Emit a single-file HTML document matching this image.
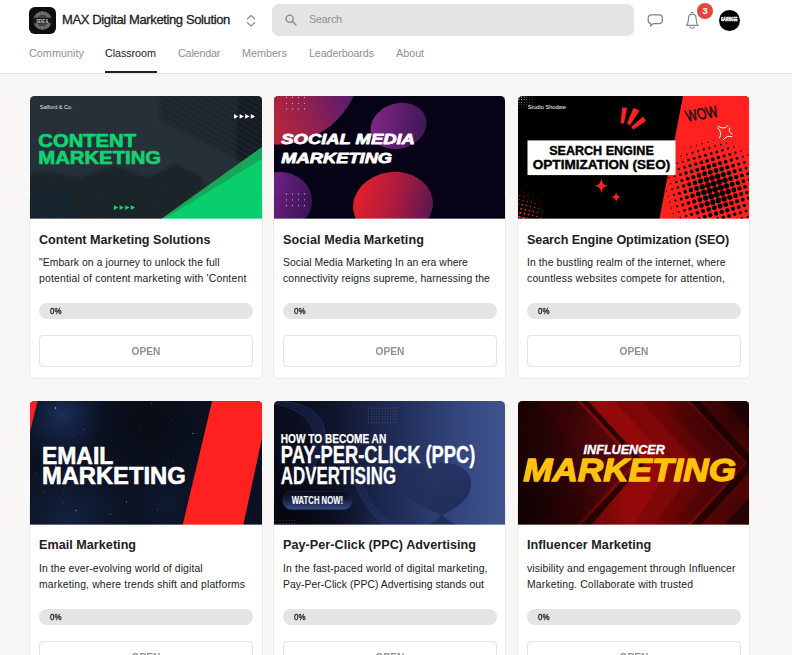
<!DOCTYPE html>
<html lang="en">
<head>
<meta charset="utf-8">
<title>MAX Digital Marketing Solution - Classroom</title>
<style>
*{box-sizing:border-box;margin:0;padding:0}
html,body{width:792px;height:655px;overflow:hidden;background:#f8f7f5;font-family:"Liberation Sans",sans-serif;color:#202124}
.header{position:absolute;left:0;top:0;width:792px;height:74px;background:#fff;border-bottom:1px solid #e4e4e4}
.logo{position:absolute;left:29px;top:7px;width:27px;height:27px;border-radius:6px;background:#0e0e0e;overflow:hidden}
.gname{position:absolute;left:62px;top:12px;font-size:13px;font-weight:400;color:#202124;white-space:nowrap;letter-spacing:0;line-height:15px;-webkit-text-stroke:0.3px #202124}
.chev{position:absolute;left:246px;top:14px}
.search{position:absolute;left:272px;top:4px;width:362px;height:32px;border-radius:7px;background:#e4e4e4}
.search svg{position:absolute;left:13px;top:10px}
.search>span{position:absolute;left:37px;top:8px;font-size:10.8px;color:#8e8e8e;line-height:14px}
.nav a{position:absolute;top:46px;font-size:10.8px;color:#909090;line-height:14px;white-space:nowrap;text-decoration:none}
.nav a.act{color:#202124}
.nav .ul{position:absolute;left:105px;top:71px;width:52px;height:2px;background:#202124}
.badge{position:absolute;left:697px;top:3px;width:16px;height:16px;border-radius:50%;background:#e5453a;color:#fff;font-size:9.9px;font-weight:700;text-align:center;line-height:15.6px}
.avatar{position:absolute;left:719px;top:10px;width:21px;height:21px;border-radius:50%;background:#000;overflow:hidden}
.avatar span{position:absolute;left:2px;top:7.3px;width:17px;height:5px;color:#fff;font-size:5.6px;font-weight:700;line-height:5px;white-space:nowrap;-webkit-text-stroke:0.4px #fff;transform:scaleX(.54);transform-origin:0 50%}
.card{position:absolute;width:232px;height:283px}
.body{position:absolute;left:-1px;top:100px;width:234px;height:183px;background:#fff;border:1px solid #ebebea;border-top:none;border-radius:0 0 5.5px 5.5px}
.thumb{position:absolute;left:0;top:0;width:232px;height:123px;overflow:hidden;border-radius:4.5px 4.5px 0 0;z-index:1}
.thumb svg{display:block}
.card.n,.card.n .thumb{width:231px}
.card.n .body{width:233px}
.thumb.r2{height:125px}
.ct{position:absolute;left:9px;top:137px;font-size:12.6px;font-weight:700;color:#202124;white-space:nowrap;line-height:15px}
.cd{position:absolute;left:9px;top:159px;width:216px;font-size:10.4px;color:#202124;line-height:16.2px;white-space:nowrap}
.ln{display:block;white-space:nowrap}
.r2 .cd{top:160px}
.r2 .pb{top:208px}
.r2 .btn{top:240px}
.pb{position:absolute;left:9px;top:207px;width:214px;height:16px;border-radius:8px;background:#e4e4e4}
.pb span{position:absolute;left:10.5px;top:3px;font-size:9px;font-weight:400;-webkit-text-stroke:0.35px #202124;color:#202124;line-height:10px;transform:scaleX(.88);transform-origin:0 50%}
.btn{position:absolute;left:9px;top:239px;width:214px;height:32px;border:1px solid #e4e4e4;border-radius:4px;text-align:center;font-size:11.3px;font-weight:700;color:#909090;line-height:30px;background:#fff}
.btn span{display:inline-block;transform:scaleX(.9)}
</style>
</head>
<body>
<div class="header">
  <div class="logo">
    <svg width="27" height="27" viewBox="0 0 27 27">
      <circle cx="13.500" cy="13.500" r="9.400" fill="#3a3a3a"/>
      <circle cx="13.500" cy="13.500" r="7.300" fill="none" stroke="#858585" stroke-width="3.400" stroke-dasharray="0.9 0.45"/>
      <circle cx="13.500" cy="13.500" r="4.600" fill="#4a4a4a"/>
      <polygon points="2.500,13.500 5.500,10.700 21.500,10.700 24.500,13.500 21.500,16.300 5.500,16.300" fill="#141414"/>
      <text x="13.600" y="15.500" font-family="Liberation Sans, sans-serif" font-size="5.400" font-weight="700" fill="#dcdcdc" text-anchor="middle" textLength="12.400" lengthAdjust="spacingAndGlyphs">DEXE B.</text>
    </svg>
  </div>
  <div class="gname"><span class="ln" style="letter-spacing:-0.377px">MAX Digital Marketing Solution</span></div>
  <svg class="chev" width="10" height="13" viewBox="0 0 10 13" fill="none" stroke="#909090" stroke-width="1.3" stroke-linecap="round" stroke-linejoin="round"><path d="M1.5 4.7 L5 1.5 L8.5 4.7"/><path d="M1.5 8.7 L5 11.9 L8.5 8.7"/></svg>
  <div class="search">
    <svg width="12" height="12" viewBox="0 0 12 12" fill="none" stroke="#8a8a8a" stroke-width="1.4" stroke-linecap="round"><circle cx="4.7" cy="4.7" r="3.6"/><path d="M7.5 7.5 L11 11"/></svg>
    <span><span class="ln" style="letter-spacing:-0.220px">Search</span></span>
  </div>
  <svg style="position:absolute;left:647.300px;top:14.100px" width="17" height="13" viewBox="0 0 17 13" fill="none" stroke="#828282" stroke-width="1.250" stroke-linejoin="round"><path d="M4.2 0.9 H12.3 A3 3 0 0 1 15.3 3.9 V6.6 A3 3 0 0 1 12.3 9.6 H6.3 L3.5 12 L3.9 9.6 A3 3 0 0 1 1.2 6.6 V3.9 A3 3 0 0 1 4.2 0.9 Z"/></svg>
  <svg style="position:absolute;left:685px;top:11px" width="15" height="19" viewBox="0 0 15 19" fill="none" stroke="#858585" stroke-width="1.15" stroke-linecap="round" stroke-linejoin="round"><path d="M6.600 1.400 H8"/><path d="M1.600 14.300 C2.900 13 3.300 11.500 3.400 8 C3.500 4.900 5 3.100 7.300 3.100 C9.600 3.100 11.100 4.900 11.200 8 C11.300 11.500 11.700 13 13 14.300 Z"/><path d="M5.100 16.200 Q7.300 18.300 9.500 16.200"/></svg>
  <div class="badge">3</div>
  <div class="avatar"><span>GAMINGEE</span></div>
  <div class="nav">
    <a style="left:29px"><span class="ln" style="letter-spacing:0.032px">Community</span></a>
    <a class="act" style="left:105px"><span class="ln" style="letter-spacing:-0.079px">Classroom</span></a>
    <a style="left:178px"><span class="ln" style="letter-spacing:-0.204px">Calendar</span></a>
    <a style="left:242px"><span class="ln" style="letter-spacing:-0.029px">Members</span></a>
    <a style="left:309px"><span class="ln" style="letter-spacing:-0.145px">Leaderboards</span></a>
    <a style="left:396px"><span class="ln" style="letter-spacing:-0.024px">About</span></a>
    <div class="ul"></div>
  </div>
</div>

<!-- CARD 1 -->
<div class="card" style="left:30px;top:96px">
  <div class="body"></div>
  <div class="thumb"><svg width="232" height="123" viewBox="30 96 232 123">
  <defs>
    <linearGradient id="g1a" x1="0" y1="0" x2="1" y2="1"><stop offset="0" stop-color="#252f37"/><stop offset="1" stop-color="#1f2a31"/></linearGradient>
    <pattern id="p1grid" width="4.5" height="4.5" patternUnits="userSpaceOnUse" patternTransform="rotate(-22) skewX(20)"><path d="M0 0H4.5M0 0V4.5" stroke="#10181e" stroke-width="0.6" fill="none"/></pattern>
    <pattern id="p1lines" width="5" height="5" patternUnits="userSpaceOnUse" patternTransform="rotate(30)"><path d="M0 0.500H5" stroke="#2c373f" stroke-width="0.600"/></pattern>
  </defs>
  <rect x="30" y="96" width="232" height="123" fill="#263038"/>
  <filter id="f1b" x="-10%" y="-10%" width="120%" height="120%"><feGaussianBlur stdDeviation="1.6"/></filter>
  <g filter="url(#f1b)">
  <polygon points="158,88 272,88 272,150 250,168 235,158 161,121" fill="#1d262d"/>
  <polygon points="238,88 272,88 272,150 250,168 236,157" fill="#161d23"/>
  <polygon points="20,176 48,171 80,178 113,166 150,178 175,164 200,176 205,186 160,225 20,225" fill="#1c252c"/>
  <polygon points="20,196 66,188 82,225 20,225" fill="#172833"/>
  </g>
  <polygon points="159,96 262,96 262,150 250,166 235,157 161,120" fill="url(#p1lines)" opacity="0.7"/>
  <polygon points="30,176 48,171 80,178 113,166 150,178 175,164 200,176 205,186 160,219 30,219" fill="url(#p1grid)" opacity="0.8"/>
  <polygon points="161,219 262,147 262,159 164,219" fill="#17a65a"/>
  <polygon points="163.500,219 262,158.500 262,219" fill="#08ce6b"/>
  <text x="39.800" y="108.500" font-family="Liberation Sans, sans-serif" font-size="5.600" fill="#e6e8ea" textLength="32.800" lengthAdjust="spacingAndGlyphs">Salford &amp; Co.</text>
  <g fill="#fff"><polygon points="234,114 238.300,116.400 234,118.800"/><polygon points="239.600,114 243.900,116.400 239.600,118.800"/><polygon points="245.200,114 249.500,116.400 245.200,118.800"/><polygon points="250.800,114 255.100,116.400 250.800,118.800"/></g>
  <g fill="#10d472"><polygon points="114,205.200 118.300,207.600 114,210"/><polygon points="119.600,205.200 123.900,207.600 119.600,210"/><polygon points="125.200,205.200 129.500,207.600 125.200,210"/><polygon points="130.800,205.200 135.100,207.600 130.800,210"/></g>
  <g font-family="Liberation Sans, sans-serif" font-weight="700" font-size="19" fill="#10d472" stroke="#10d472" stroke-width="0.700" stroke-linejoin="round">
    <text x="38.300" y="147.100" textLength="97.800" lengthAdjust="spacingAndGlyphs">CONTENT</text>
    <text x="38.300" y="164.100" textLength="122.800" lengthAdjust="spacingAndGlyphs">MARKETING</text>
  </g>
  <rect x="30" y="218.650" width="232" height="1" fill="#fff"/>
</svg></div>
  <div class="ct"><span class="ln" style="letter-spacing:-0.001px">Content Marketing Solutions</span></div>
  <div class="cd"><span class="ln" style="letter-spacing:0.078px">"Embark on a journey to unlock the full</span><span class="ln" style="letter-spacing:0.194px">potential of content marketing with 'Content</span></div>
  <div class="pb"><span>0%</span></div>
  <div class="btn"><span>OPEN</span></div>
</div>
<!-- CARD 2 -->
<div class="card n" style="left:274px;top:96px">
  <div class="body"></div>
  <div class="thumb"><svg width="232" height="123" viewBox="274 96 232 123">
  <defs>
    <linearGradient id="g2a" gradientUnits="userSpaceOnUse" x1="274" y1="130" x2="350" y2="96"><stop offset="0" stop-color="#b8263a"/><stop offset="0.5" stop-color="#8e2052"/><stop offset="1" stop-color="#5a1b6c"/></linearGradient>
    <linearGradient id="g2b" gradientUnits="userSpaceOnUse" x1="372" y1="115" x2="426" y2="140"><stop offset="0" stop-color="#80268a"/><stop offset="1" stop-color="#3c1652"/></linearGradient>
    <linearGradient id="g2c" gradientUnits="userSpaceOnUse" x1="274" y1="190" x2="312" y2="200"><stop offset="0" stop-color="#6a2080"/><stop offset="1" stop-color="#3c1456"/></linearGradient>
    <linearGradient id="g2d" gradientUnits="userSpaceOnUse" x1="356" y1="185" x2="430" y2="215"><stop offset="0" stop-color="#e8202a"/><stop offset="0.5" stop-color="#b01c3c"/><stop offset="1" stop-color="#5e1652"/></linearGradient>
  </defs>
  <rect x="274" y="96" width="232" height="123" fill="#060317"/>
  <circle cx="277.600" cy="60.700" r="83.850" fill="url(#g2a)"/>
  <ellipse cx="398.600" cy="126" rx="28.500" ry="22.500" fill="url(#g2b)" transform="rotate(-18 398.600 126)"/>
  <ellipse cx="280" cy="201" rx="32" ry="29" fill="url(#g2c)"/>
  <ellipse cx="393" cy="205" rx="40" ry="33" fill="url(#g2d)" transform="rotate(-8 392.700 205)"/>
  <g fill="#fff" opacity="0.6"><circle cx="286.5" cy="97.5" r="0.65"/><circle cx="292.5" cy="97.5" r="0.65"/><circle cx="298.5" cy="97.5" r="0.65"/><circle cx="304.5" cy="97.5" r="0.65"/><circle cx="286.5" cy="103.3" r="0.65"/><circle cx="292.5" cy="103.3" r="0.65"/><circle cx="298.5" cy="103.3" r="0.65"/><circle cx="304.5" cy="103.3" r="0.65"/><circle cx="286.5" cy="109.0" r="0.65"/><circle cx="292.5" cy="109.0" r="0.65"/><circle cx="298.5" cy="109.0" r="0.65"/><circle cx="304.5" cy="109.0" r="0.65"/><circle cx="286.5" cy="194.0" r="0.65"/><circle cx="292.5" cy="194.0" r="0.65"/><circle cx="298.5" cy="194.0" r="0.65"/><circle cx="304.5" cy="194.0" r="0.65"/><circle cx="286.5" cy="199.8" r="0.65"/><circle cx="292.5" cy="199.8" r="0.65"/><circle cx="298.5" cy="199.8" r="0.65"/><circle cx="304.5" cy="199.8" r="0.65"/><circle cx="286.5" cy="205.5" r="0.65"/><circle cx="292.5" cy="205.5" r="0.65"/><circle cx="298.5" cy="205.5" r="0.65"/><circle cx="304.5" cy="205.5" r="0.65"/></g>
  <g font-family="Liberation Sans, sans-serif" font-weight="700" font-style="italic" font-size="15.200" fill="#fff" stroke="#fff" stroke-width="0.800" stroke-linejoin="round">
    <text x="281.300" y="144.400" textLength="133.600" lengthAdjust="spacingAndGlyphs">SOCIAL MEDIA</text>
    <text x="281.300" y="163.200" textLength="110.800" lengthAdjust="spacingAndGlyphs">MARKETING</text>
  </g>
  <rect x="274" y="218.650" width="232" height="1" fill="#fff"/>
</svg></div>
  <div class="ct"><span class="ln" style="letter-spacing:0.078px">Social Media Marketing</span></div>
  <div class="cd"><span class="ln" style="letter-spacing:0.048px">Social Media Marketing In an era where</span><span class="ln" style="letter-spacing:0.099px">connectivity reigns supreme, harnessing the</span></div>
  <div class="pb"><span>0%</span></div>
  <div class="btn"><span>OPEN</span></div>
</div>
<!-- CARD 3 -->
<div class="card n" style="left:518px;top:96px">
  <div class="body"></div>
  <div class="thumb"><svg width="232" height="123" viewBox="518 96 232 123">
  <rect x="518" y="96" width="232" height="123" fill="#000"/>
  <polygon points="683,96 750,96 750,219 659.400,219" fill="#ff2020"/>
  <g fill="#000"><circle cx="666.58" cy="190.87" r="0.59"/><circle cx="668.2" cy="196.54" r="0.68"/><circle cx="669.83" cy="202.21" r="0.71"/><circle cx="671.45" cy="207.88" r="0.68"/><circle cx="673.08" cy="213.55" r="0.59"/><circle cx="674.71" cy="219.22" r="0.46"/><circle cx="668.99" cy="177.9" r="0.68"/><circle cx="670.62" cy="183.57" r="0.88"/><circle cx="672.25" cy="189.24" r="1.02"/><circle cx="673.87" cy="194.91" r="1.11"/><circle cx="675.5" cy="200.58" r="1.14"/><circle cx="677.13" cy="206.26" r="1.11"/><circle cx="678.75" cy="211.93" r="1.02"/><circle cx="680.38" cy="217.6" r="0.88"/><circle cx="671.41" cy="164.93" r="0.48"/><circle cx="673.04" cy="170.6" r="0.79"/><circle cx="674.67" cy="176.27" r="1.05"/><circle cx="676.29" cy="181.94" r="1.26"/><circle cx="677.92" cy="187.61" r="1.41"/><circle cx="679.55" cy="193.29" r="1.5"/><circle cx="681.17" cy="198.96" r="1.53"/><circle cx="682.8" cy="204.63" r="1.5"/><circle cx="684.42" cy="210.3" r="1.41"/><circle cx="686.05" cy="215.97" r="1.26"/><circle cx="687.68" cy="221.64" r="1.05"/><circle cx="675.46" cy="157.63" r="0.43"/><circle cx="677.09" cy="163.3" r="0.79"/><circle cx="678.71" cy="168.97" r="1.11"/><circle cx="680.34" cy="174.65" r="1.38"/><circle cx="681.96" cy="180.32" r="1.6"/><circle cx="683.59" cy="185.99" r="1.76"/><circle cx="685.22" cy="191.66" r="1.86"/><circle cx="686.84" cy="197.33" r="1.89"/><circle cx="688.47" cy="203" r="1.86"/><circle cx="690.1" cy="208.67" r="1.76"/><circle cx="691.72" cy="214.35" r="1.6"/><circle cx="693.35" cy="220.02" r="1.38"/><circle cx="679.5" cy="150.33" r="0.27"/><circle cx="681.13" cy="156" r="0.68"/><circle cx="682.76" cy="161.68" r="1.05"/><circle cx="684.38" cy="167.35" r="1.38"/><circle cx="686.01" cy="173.02" r="1.66"/><circle cx="687.64" cy="178.69" r="1.89"/><circle cx="689.26" cy="184.36" r="2.07"/><circle cx="690.89" cy="190.03" r="2.17"/><circle cx="692.51" cy="195.71" r="2.21"/><circle cx="694.14" cy="201.38" r="2.17"/><circle cx="695.77" cy="207.05" r="2.07"/><circle cx="697.39" cy="212.72" r="1.89"/><circle cx="699.02" cy="218.39" r="1.66"/><circle cx="685.18" cy="148.71" r="0.46"/><circle cx="686.8" cy="154.38" r="0.88"/><circle cx="688.43" cy="160.05" r="1.26"/><circle cx="690.05" cy="165.72" r="1.6"/><circle cx="691.68" cy="171.39" r="1.89"/><circle cx="693.31" cy="177.06" r="2.14"/><circle cx="694.93" cy="182.74" r="2.32"/><circle cx="696.56" cy="188.41" r="2.44"/><circle cx="698.19" cy="194.08" r="2.48"/><circle cx="699.81" cy="199.75" r="2.44"/><circle cx="701.44" cy="205.42" r="2.32"/><circle cx="703.06" cy="211.09" r="2.14"/><circle cx="704.69" cy="216.76" r="1.89"/><circle cx="690.85" cy="147.08" r="0.59"/><circle cx="692.47" cy="152.75" r="1.02"/><circle cx="694.1" cy="158.42" r="1.41"/><circle cx="695.73" cy="164.1" r="1.76"/><circle cx="697.35" cy="169.77" r="2.07"/><circle cx="698.98" cy="175.44" r="2.32"/><circle cx="700.6" cy="181.11" r="2.52"/><circle cx="702.23" cy="186.78" r="2.66"/><circle cx="703.86" cy="192.45" r="2.71"/><circle cx="705.48" cy="198.12" r="2.66"/><circle cx="707.11" cy="203.8" r="2.52"/><circle cx="708.74" cy="209.47" r="2.32"/><circle cx="710.36" cy="215.14" r="2.07"/><circle cx="711.99" cy="220.81" r="1.76"/><circle cx="696.52" cy="145.45" r="0.68"/><circle cx="698.14" cy="151.13" r="1.11"/><circle cx="699.77" cy="156.8" r="1.5"/><circle cx="701.4" cy="162.47" r="1.86"/><circle cx="703.02" cy="168.14" r="2.17"/><circle cx="704.65" cy="173.81" r="2.44"/><circle cx="706.28" cy="179.48" r="2.66"/><circle cx="707.9" cy="185.15" r="2.81"/><circle cx="709.53" cy="190.83" r="2.87"/><circle cx="711.15" cy="196.5" r="2.81"/><circle cx="712.78" cy="202.17" r="2.66"/><circle cx="714.41" cy="207.84" r="2.44"/><circle cx="716.03" cy="213.51" r="2.17"/><circle cx="717.66" cy="219.18" r="1.86"/><circle cx="702.19" cy="143.83" r="0.71"/><circle cx="703.82" cy="149.5" r="1.14"/><circle cx="705.44" cy="155.17" r="1.53"/><circle cx="707.07" cy="160.84" r="1.89"/><circle cx="708.69" cy="166.51" r="2.21"/><circle cx="710.32" cy="172.19" r="2.48"/><circle cx="711.95" cy="177.86" r="2.71"/><circle cx="713.57" cy="183.53" r="2.87"/><circle cx="715.2" cy="189.2" r="2.95"/><circle cx="716.83" cy="194.87" r="2.87"/><circle cx="718.45" cy="200.54" r="2.71"/><circle cx="720.08" cy="206.21" r="2.48"/><circle cx="721.71" cy="211.89" r="2.21"/><circle cx="723.33" cy="217.56" r="1.89"/><circle cx="707.86" cy="142.2" r="0.68"/><circle cx="709.49" cy="147.87" r="1.11"/><circle cx="711.11" cy="153.55" r="1.5"/><circle cx="712.74" cy="159.22" r="1.86"/><circle cx="714.37" cy="164.89" r="2.17"/><circle cx="715.99" cy="170.56" r="2.44"/><circle cx="717.62" cy="176.23" r="2.66"/><circle cx="719.25" cy="181.9" r="2.81"/><circle cx="720.87" cy="187.57" r="2.87"/><circle cx="722.5" cy="193.25" r="2.81"/><circle cx="724.12" cy="198.92" r="2.66"/><circle cx="725.75" cy="204.59" r="2.44"/><circle cx="727.38" cy="210.26" r="2.17"/><circle cx="729" cy="215.93" r="1.86"/><circle cx="730.63" cy="221.6" r="1.5"/><circle cx="713.53" cy="140.58" r="0.59"/><circle cx="715.16" cy="146.25" r="1.02"/><circle cx="716.79" cy="151.92" r="1.41"/><circle cx="718.41" cy="157.59" r="1.76"/><circle cx="720.04" cy="163.26" r="2.07"/><circle cx="721.66" cy="168.93" r="2.32"/><circle cx="723.29" cy="174.6" r="2.52"/><circle cx="724.92" cy="180.28" r="2.66"/><circle cx="726.54" cy="185.95" r="2.71"/><circle cx="728.17" cy="191.62" r="2.66"/><circle cx="729.8" cy="197.29" r="2.52"/><circle cx="731.42" cy="202.96" r="2.32"/><circle cx="733.05" cy="208.63" r="2.07"/><circle cx="734.67" cy="214.3" r="1.76"/><circle cx="736.3" cy="219.98" r="1.41"/><circle cx="719.2" cy="138.95" r="0.46"/><circle cx="720.83" cy="144.62" r="0.88"/><circle cx="722.46" cy="150.29" r="1.26"/><circle cx="724.08" cy="155.96" r="1.6"/><circle cx="725.71" cy="161.64" r="1.89"/><circle cx="727.34" cy="167.31" r="2.14"/><circle cx="728.96" cy="172.98" r="2.32"/><circle cx="730.59" cy="178.65" r="2.44"/><circle cx="732.21" cy="184.32" r="2.48"/><circle cx="733.84" cy="189.99" r="2.44"/><circle cx="735.47" cy="195.66" r="2.32"/><circle cx="737.09" cy="201.34" r="2.14"/><circle cx="738.72" cy="207.01" r="1.89"/><circle cx="740.35" cy="212.68" r="1.6"/><circle cx="741.97" cy="218.35" r="1.26"/><circle cx="724.88" cy="137.32" r="0.27"/><circle cx="726.5" cy="142.99" r="0.68"/><circle cx="728.13" cy="148.67" r="1.05"/><circle cx="729.75" cy="154.34" r="1.38"/><circle cx="731.38" cy="160.01" r="1.66"/><circle cx="733.01" cy="165.68" r="1.89"/><circle cx="734.63" cy="171.35" r="2.07"/><circle cx="736.26" cy="177.02" r="2.17"/><circle cx="737.89" cy="182.69" r="2.21"/><circle cx="739.51" cy="188.37" r="2.17"/><circle cx="741.14" cy="194.04" r="2.07"/><circle cx="742.76" cy="199.71" r="1.89"/><circle cx="744.39" cy="205.38" r="1.66"/><circle cx="746.02" cy="211.05" r="1.38"/><circle cx="747.64" cy="216.72" r="1.05"/><circle cx="732.17" cy="141.37" r="0.43"/><circle cx="733.8" cy="147.04" r="0.79"/><circle cx="735.43" cy="152.71" r="1.11"/><circle cx="737.05" cy="158.38" r="1.38"/><circle cx="738.68" cy="164.05" r="1.6"/><circle cx="740.3" cy="169.73" r="1.76"/><circle cx="741.93" cy="175.4" r="1.86"/><circle cx="743.56" cy="181.07" r="1.89"/><circle cx="745.18" cy="186.74" r="1.86"/><circle cx="746.81" cy="192.41" r="1.76"/><circle cx="748.44" cy="198.08" r="1.6"/><circle cx="750.06" cy="203.75" r="1.38"/><circle cx="751.69" cy="209.43" r="1.11"/><circle cx="739.47" cy="145.41" r="0.48"/><circle cx="741.1" cy="151.09" r="0.79"/><circle cx="742.72" cy="156.76" r="1.05"/><circle cx="744.35" cy="162.43" r="1.26"/><circle cx="745.98" cy="168.1" r="1.41"/><circle cx="747.6" cy="173.77" r="1.5"/><circle cx="749.23" cy="179.44" r="1.53"/><circle cx="750.85" cy="185.11" r="1.5"/><circle cx="752.48" cy="190.79" r="1.41"/><circle cx="746.77" cy="149.46" r="0.43"/><circle cx="748.4" cy="155.13" r="0.68"/><circle cx="750.02" cy="160.8" r="0.88"/><circle cx="751.65" cy="166.47" r="1.02"/></g>
  <g fill="#ff2020"><circle cx="520.63" cy="191.48" r="0.35"/><circle cx="519.76" cy="195.59" r="0.52"/><circle cx="518.88" cy="199.69" r="0.68"/><circle cx="518.01" cy="203.8" r="0.84"/><circle cx="517.14" cy="207.91" r="1"/><circle cx="524.74" cy="192.35" r="0.35"/><circle cx="523.87" cy="196.46" r="0.51"/><circle cx="522.99" cy="200.57" r="0.68"/><circle cx="522.12" cy="204.68" r="0.84"/><circle cx="521.25" cy="208.78" r="1"/><circle cx="520.37" cy="212.89" r="1.16"/><circle cx="519.5" cy="217" r="1.31"/><circle cx="528.85" cy="193.22" r="0.33"/><circle cx="527.97" cy="197.33" r="0.49"/><circle cx="527.1" cy="201.44" r="0.64"/><circle cx="526.23" cy="205.55" r="0.8"/><circle cx="525.35" cy="209.66" r="0.95"/><circle cx="524.48" cy="213.77" r="1.09"/><circle cx="523.61" cy="217.87" r="1.21"/><circle cx="532.96" cy="194.1" r="0.28"/><circle cx="532.08" cy="198.21" r="0.44"/><circle cx="531.21" cy="202.31" r="0.59"/><circle cx="530.34" cy="206.42" r="0.73"/><circle cx="529.46" cy="210.53" r="0.86"/><circle cx="528.59" cy="214.64" r="0.98"/><circle cx="527.72" cy="218.75" r="1.08"/><circle cx="537.06" cy="194.97" r="0.22"/><circle cx="536.19" cy="199.08" r="0.37"/><circle cx="535.32" cy="203.19" r="0.51"/><circle cx="534.44" cy="207.3" r="0.64"/><circle cx="533.57" cy="211.4" r="0.75"/><circle cx="532.7" cy="215.51" r="0.86"/><circle cx="531.82" cy="219.62" r="0.93"/><circle cx="540.3" cy="199.95" r="0.28"/><circle cx="539.43" cy="204.06" r="0.41"/><circle cx="538.55" cy="208.17" r="0.52"/><circle cx="537.68" cy="212.28" r="0.63"/><circle cx="536.81" cy="216.38" r="0.71"/><circle cx="535.93" cy="220.49" r="0.78"/><circle cx="543.53" cy="204.93" r="0.29"/><circle cx="542.66" cy="209.04" r="0.4"/><circle cx="541.79" cy="213.15" r="0.49"/><circle cx="540.91" cy="217.26" r="0.57"/><circle cx="546.77" cy="209.91" r="0.27"/><circle cx="545.9" cy="214.02" r="0.35"/><circle cx="545.02" cy="218.13" r="0.42"/><circle cx="550" cy="214.9" r="0.2"/><circle cx="549.13" cy="219" r="0.26"/></g>
  <g fill="#fff"><circle cx="519" cy="97" r="0.69"/><circle cx="519" cy="99.6" r="0.59"/><circle cx="519" cy="102.2" r="0.47"/><circle cx="519" cy="104.8" r="0.36"/><circle cx="519" cy="107.4" r="0.25"/><circle cx="521.6" cy="97" r="0.62"/><circle cx="521.6" cy="99.6" r="0.55"/><circle cx="521.6" cy="102.2" r="0.45"/><circle cx="521.6" cy="104.8" r="0.34"/><circle cx="521.6" cy="107.4" r="0.23"/><circle cx="524.2" cy="97" r="0.53"/><circle cx="524.2" cy="99.6" r="0.48"/><circle cx="524.2" cy="102.2" r="0.4"/><circle cx="524.2" cy="104.8" r="0.3"/><circle cx="524.2" cy="107.4" r="0.2"/><circle cx="526.8" cy="97" r="0.44"/><circle cx="526.8" cy="99.6" r="0.4"/><circle cx="526.8" cy="102.2" r="0.34"/><circle cx="526.8" cy="104.8" r="0.25"/><circle cx="526.8" cy="107.4" r="0.16"/><circle cx="529.4" cy="97" r="0.35"/><circle cx="529.4" cy="99.6" r="0.32"/><circle cx="529.4" cy="102.2" r="0.26"/><circle cx="529.4" cy="104.8" r="0.19"/><circle cx="532" cy="97" r="0.25"/><circle cx="532" cy="99.6" r="0.23"/><circle cx="532" cy="102.2" r="0.19"/><circle cx="534.6" cy="97" r="0.16"/></g>
  <rect x="527.500" y="140.400" width="148" height="34.700" fill="#fff"/>
  <g font-family="Liberation Sans, sans-serif" font-weight="700" font-size="12.800" fill="#000" stroke="#000" stroke-width="0.400" text-anchor="middle">
    <text x="601.500" y="155.400" textLength="104.600" lengthAdjust="spacingAndGlyphs">SEARCH ENGINE</text>
    <text x="601.500" y="168.700" textLength="137.400" lengthAdjust="spacingAndGlyphs">OPTIMIZATION (SEO)</text>
  </g>
  <g fill="#ff2020">
    <polygon points="622.200,107.500 627.100,107.700 624,123.600 620.600,123.300"/>
    <polygon points="633.400,108 639.600,110.400 630,125.200 627,123.500"/>
    <polygon points="643,116.500 645.900,121 633.400,129.400 631.200,126.900"/>
    <path d="M601.3 177.90 Q601.53 185.47 609.10 185.7 Q601.53 185.93 601.3 193.50 Q601.07 185.93 593.50 185.7 Q601.07 185.47 601.3 177.90 Z"/><path d="M616.1 191.30 Q616.27 196.93 621.90 197.1 Q616.27 197.27 616.1 202.90 Q615.93 197.27 610.30 197.1 Q615.93 196.93 616.1 191.30 Z"/>
  </g>
  <text x="527.800" y="108.900" font-family="Liberation Sans, sans-serif" font-size="5.600" fill="#fff" textLength="38" lengthAdjust="spacingAndGlyphs">Studio Shodwe</text>
  <text transform="translate(687.6 121.6) rotate(-9) skewX(10)" font-family="Liberation Sans, sans-serif" font-size="16" fill="#111" stroke="#111" stroke-width="0.55" stroke-linejoin="round" textLength="32" lengthAdjust="spacingAndGlyphs">WOW</text>
  <g fill="none" stroke="#fff" stroke-width="1" stroke-linecap="round">
    <path d="M718.2 126.300 Q724.500 130.500 728.100 125.300"/>
    <path d="M717.600 127.600 Q722.600 132.400 719.500 138"/>
    <path d="M729.800 127.800 Q727.600 132 732.300 134"/>
    <path d="M723.200 139.800 Q726 135.200 731.700 136.500"/>
  </g>
  <rect x="518" y="218.650" width="232" height="1" fill="#fff"/>
</svg></div>
  <div class="ct"><span class="ln" style="letter-spacing:-0.114px">Search Engine Optimization (SEO)</span></div>
  <div class="cd"><span class="ln" style="letter-spacing:0.103px">In the bustling realm of the internet, where</span><span class="ln" style="letter-spacing:0.180px">countless websites compete for attention,</span></div>
  <div class="pb"><span>0%</span></div>
  <div class="btn"><span>OPEN</span></div>
</div>
<!-- CARD 4 -->
<div class="card r2" style="left:30px;top:401px">
  <div class="body"></div>
  <div class="thumb r2"><svg width="232" height="124" viewBox="30 401 232 124">
  <defs>
    <radialGradient id="g4a" gradientUnits="userSpaceOnUse" cx="62" cy="415" r="55"><stop offset="0" stop-color="#1d3462" stop-opacity="0.85"/><stop offset="0.5" stop-color="#15264a" stop-opacity="0.5"/><stop offset="1" stop-color="#0c1428" stop-opacity="0"/></radialGradient>
    <radialGradient id="g4b" gradientUnits="userSpaceOnUse" cx="70" cy="520" r="75"><stop offset="0" stop-color="#16284e" stop-opacity="0.75"/><stop offset="0.6" stop-color="#111e38" stop-opacity="0.4"/><stop offset="1" stop-color="#0c1428" stop-opacity="0"/></radialGradient>
    <radialGradient id="g4c" gradientUnits="userSpaceOnUse" cx="150" cy="425" r="60"><stop offset="0" stop-color="#070b14" stop-opacity="0.9"/><stop offset="1" stop-color="#070b14" stop-opacity="0"/></radialGradient>
    <radialGradient id="g4d" gradientUnits="userSpaceOnUse" cx="165" cy="505" r="50"><stop offset="0" stop-color="#101d38" stop-opacity="0.7"/><stop offset="1" stop-color="#0c1428" stop-opacity="0"/></radialGradient>
  </defs>
  <rect x="30" y="401" width="232" height="124" fill="#0b1120"/>
  <rect x="30" y="401" width="232" height="124" fill="url(#g4a)"/>
  <rect x="30" y="401" width="232" height="124" fill="url(#g4b)"/>
  <rect x="30" y="401" width="232" height="124" fill="url(#g4d)"/>
  <rect x="30" y="401" width="232" height="124" fill="url(#g4c)"/>
  <g fill="#cfe0ff"><circle cx="105.1" cy="419.6" r="0.25" opacity="0.28"/><circle cx="154.3" cy="446" r="0.25" opacity="0.66"/><circle cx="79.8" cy="411.6" r="0.45" opacity="0.28"/><circle cx="51" cy="453.2" r="0.25" opacity="0.68"/><circle cx="176.3" cy="472.7" r="0.25" opacity="0.51"/><circle cx="122" cy="521.1" r="0.25" opacity="0.50"/><circle cx="60.9" cy="452.6" r="0.25" opacity="0.51"/><circle cx="160" cy="484.9" r="0.25" opacity="0.51"/><circle cx="178.2" cy="446.8" r="0.25" opacity="0.50"/><circle cx="173.6" cy="462.1" r="0.45" opacity="0.60"/><circle cx="138" cy="514.6" r="0.35" opacity="0.38"/><circle cx="214.3" cy="487" r="0.3" opacity="0.29"/><circle cx="99.7" cy="461.9" r="0.35" opacity="0.58"/><circle cx="96.8" cy="521.6" r="0.25" opacity="0.48"/><circle cx="68.3" cy="443.1" r="0.45" opacity="0.44"/><circle cx="253.2" cy="410.5" r="0.35" opacity="0.40"/><circle cx="111.2" cy="462.1" r="0.45" opacity="0.28"/><circle cx="51.7" cy="434.2" r="0.25" opacity="0.28"/><circle cx="192.7" cy="480.6" r="0.45" opacity="0.38"/><circle cx="119.5" cy="483.2" r="0.25" opacity="0.67"/><circle cx="112.5" cy="476.1" r="0.45" opacity="0.28"/><circle cx="208.2" cy="416.9" r="0.3" opacity="0.43"/><circle cx="242.7" cy="462.1" r="0.3" opacity="0.45"/><circle cx="157.5" cy="509.7" r="0.45" opacity="0.64"/><circle cx="94.6" cy="452.1" r="0.35" opacity="0.56"/><circle cx="118.3" cy="429.4" r="0.25" opacity="0.33"/><circle cx="83.8" cy="429.7" r="0.45" opacity="0.62"/><circle cx="72.3" cy="435.7" r="0.3" opacity="0.44"/><circle cx="115.7" cy="470.7" r="0.3" opacity="0.56"/><circle cx="149.6" cy="477" r="0.25" opacity="0.46"/><circle cx="232.1" cy="518.1" r="0.45" opacity="0.43"/><circle cx="121.4" cy="460.2" r="0.45" opacity="0.28"/><circle cx="45.6" cy="426.7" r="0.3" opacity="0.30"/><circle cx="169.4" cy="413.6" r="0.3" opacity="0.49"/><circle cx="250.2" cy="476.5" r="0.25" opacity="0.64"/><circle cx="172.5" cy="419.3" r="0.35" opacity="0.68"/><circle cx="169.7" cy="459.3" r="0.25" opacity="0.63"/><circle cx="260.4" cy="458.3" r="0.45" opacity="0.39"/><circle cx="63.4" cy="493.2" r="0.35" opacity="0.47"/><circle cx="190.6" cy="464.5" r="0.3" opacity="0.68"/><circle cx="152.6" cy="419" r="0.25" opacity="0.59"/><circle cx="99.2" cy="480.1" r="0.25" opacity="0.56"/><circle cx="90.6" cy="446.1" r="0.3" opacity="0.41"/><circle cx="81.7" cy="467.6" r="0.35" opacity="0.54"/><circle cx="172.3" cy="498" r="0.3" opacity="0.61"/><circle cx="219.9" cy="492" r="0.3" opacity="0.34"/><circle cx="144.3" cy="490.9" r="0.25" opacity="0.61"/><circle cx="139.6" cy="424.8" r="0.35" opacity="0.45"/><circle cx="247.4" cy="522.5" r="0.35" opacity="0.29"/><circle cx="53.7" cy="458.8" r="0.35" opacity="0.34"/><circle cx="174.8" cy="511.7" r="0.25" opacity="0.47"/><circle cx="181.5" cy="499.4" r="0.25" opacity="0.63"/><circle cx="57.8" cy="448.8" r="0.3" opacity="0.47"/><circle cx="71.4" cy="498.1" r="0.35" opacity="0.29"/><circle cx="249.5" cy="489.8" r="0.45" opacity="0.43"/><circle cx="249.7" cy="490.2" r="0.3" opacity="0.70"/><circle cx="36.4" cy="473.7" r="0.45" opacity="0.61"/><circle cx="63.9" cy="502.7" r="0.45" opacity="0.55"/><circle cx="111.3" cy="468.5" r="0.3" opacity="0.26"/><circle cx="215.5" cy="490.3" r="0.25" opacity="0.49"/><circle cx="246.6" cy="454.4" r="0.3" opacity="0.62"/><circle cx="79" cy="432" r="0.35" opacity="0.48"/><circle cx="207.2" cy="441.1" r="0.45" opacity="0.63"/><circle cx="44.1" cy="492" r="0.45" opacity="0.55"/><circle cx="219.1" cy="464.6" r="0.3" opacity="0.49"/><circle cx="151.5" cy="403.3" r="0.45" opacity="0.60"/><circle cx="171.2" cy="496.5" r="0.3" opacity="0.33"/><circle cx="139.9" cy="490.2" r="0.25" opacity="0.40"/><circle cx="150.3" cy="469.3" r="0.25" opacity="0.65"/><circle cx="43.2" cy="424.5" r="0.25" opacity="0.60"/><circle cx="55.5" cy="408" r="0.8" opacity="0.85"/><circle cx="76" cy="510.5" r="0.5" opacity="0.85"/><circle cx="126.5" cy="502" r="0.5" opacity="0.85"/><circle cx="110.5" cy="514" r="0.45" opacity="0.85"/><circle cx="193" cy="433.5" r="0.6" opacity="0.85"/><circle cx="55.5" cy="466" r="0.5" opacity="0.85"/></g>
  <polygon points="212.100,401 262,401 262,438 243.300,525 182.700,525" fill="#ff2020"/>
  <polygon points="30,401 37.500,401 30,431.500" fill="#ff2020"/>
  <g font-family="Liberation Sans, sans-serif" font-weight="700" font-size="23.500" fill="#fff" stroke="#fff" stroke-width="0.600" stroke-linejoin="round">
    <text x="41.900" y="463.500" textLength="71.400" lengthAdjust="spacingAndGlyphs">EMAIL</text>
    <text x="41.900" y="483.700" textLength="143.800" lengthAdjust="spacingAndGlyphs">MARKETING</text>
  </g>
  
  <rect x="30" y="524.650" width="232" height="1" fill="#fff"/>
</svg></div>
  <div class="ct"><span class="ln" style="letter-spacing:0.034px">Email Marketing</span></div>
  <div class="cd"><span class="ln" style="letter-spacing:0.100px">In the ever-evolving world of digital</span><span class="ln" style="letter-spacing:0.162px">marketing, where trends shift and platforms</span></div>
  <div class="pb"><span>0%</span></div>
  <div class="btn"><span>OPEN</span></div>
</div>
<!-- CARD 5 -->
<div class="card r2 n" style="left:274px;top:401px">
  <div class="body"></div>
  <div class="thumb r2"><svg width="232" height="124" viewBox="274 401 232 124">
  <defs>
    <linearGradient id="g5a" gradientUnits="userSpaceOnUse" x1="274" y1="0" x2="506" y2="0"><stop offset="0" stop-color="#090b1b"/><stop offset="0.25" stop-color="#10152b"/><stop offset="0.5" stop-color="#1e2a53"/><stop offset="0.8" stop-color="#33467e"/><stop offset="1" stop-color="#3f548f"/></linearGradient>
    <radialGradient id="g5b" gradientUnits="userSpaceOnUse" cx="285" cy="520" r="90"><stop offset="0" stop-color="#04050d" stop-opacity="0.85"/><stop offset="1" stop-color="#04050d" stop-opacity="0"/></radialGradient>
    <linearGradient id="g5c" x1="0" y1="0" x2="0" y2="1"><stop offset="0" stop-color="#080a18"/><stop offset="0.4" stop-color="#141a38"/><stop offset="1" stop-color="#384c86"/></linearGradient>
    <linearGradient id="g5d" gradientUnits="userSpaceOnUse" x1="405" y1="462" x2="462" y2="512"><stop offset="0" stop-color="#1c2850" stop-opacity="0.15"/><stop offset="0.5" stop-color="#1d2a54" stop-opacity="0.6"/><stop offset="1" stop-color="#1d2a55" stop-opacity="0.9"/></linearGradient>
  </defs>
  <rect x="274" y="401" width="232" height="124" fill="url(#g5a)"/>
  <rect x="274" y="401" width="232" height="124" fill="url(#g5b)"/>
  <path d="M276 401 C300 401 322 410 324.500 431 C326 447 316 466 300 486 C311 462 316 446 313 432 C310 418 296 408 274 404 Z" fill="#2c4488" opacity="0.24"/>
  <path d="M278 401.500 C301 401.500 322 410 324.500 431 C326 447 316 466 300 486" fill="none" stroke="#3c58a6" stroke-width="0.600" opacity="0.55"/>
  <path d="M274 404 C296 408 310 418 313 432 C316 446 311 462 300 486" fill="none" stroke="#3c58a6" stroke-width="0.500" opacity="0.4"/>
  <path d="M352 470 C356 492 366 510 384 525 L396 525 C376 512 364 494 362 470 Z" fill="#2c4488" opacity="0.22"/>
  <path d="M352 470 C356 492 366 510 384 525" fill="none" stroke="#4a66b0" stroke-width="0.500" opacity="0.45"/>
  <path d="M442 515 C424 508 400 496 398 482 C397 470 424 461 448 463 C467 465 474 478 470 491 C466 503 452 510 442 515 Z" fill="url(#g5d)"/>
  <path d="M442 514.500 C438 519 433 523 427 525 L458 525 C451 523 446 519 442 514.500 Z" fill="#1b2750" opacity="0.7"/>
  <g fill="#c9d1e8" opacity="0.55"><circle cx="368.6" cy="408" r="0.42"/><circle cx="368.6" cy="410.95" r="0.42"/><circle cx="368.6" cy="413.9" r="0.42"/><circle cx="368.6" cy="416.85" r="0.42"/><circle cx="368.6" cy="419.8" r="0.42"/><circle cx="368.6" cy="422.75" r="0.42"/><circle cx="371.34" cy="408" r="0.42"/><circle cx="371.34" cy="410.95" r="0.42"/><circle cx="371.34" cy="413.9" r="0.42"/><circle cx="371.34" cy="416.85" r="0.42"/><circle cx="371.34" cy="419.8" r="0.42"/><circle cx="371.34" cy="422.75" r="0.42"/><circle cx="374.08" cy="408" r="0.42"/><circle cx="374.08" cy="410.95" r="0.42"/><circle cx="374.08" cy="413.9" r="0.42"/><circle cx="374.08" cy="416.85" r="0.42"/><circle cx="374.08" cy="419.8" r="0.42"/><circle cx="374.08" cy="422.75" r="0.42"/><circle cx="376.82" cy="408" r="0.42"/><circle cx="376.82" cy="410.95" r="0.42"/><circle cx="376.82" cy="413.9" r="0.42"/><circle cx="376.82" cy="416.85" r="0.42"/><circle cx="376.82" cy="419.8" r="0.42"/><circle cx="376.82" cy="422.75" r="0.42"/><circle cx="379.56" cy="408" r="0.42"/><circle cx="379.56" cy="410.95" r="0.42"/><circle cx="379.56" cy="413.9" r="0.42"/><circle cx="379.56" cy="416.85" r="0.42"/><circle cx="379.56" cy="419.8" r="0.42"/><circle cx="379.56" cy="422.75" r="0.42"/><circle cx="382.3" cy="408" r="0.42"/><circle cx="382.3" cy="410.95" r="0.42"/><circle cx="382.3" cy="413.9" r="0.42"/><circle cx="382.3" cy="416.85" r="0.42"/><circle cx="382.3" cy="419.8" r="0.42"/><circle cx="382.3" cy="422.75" r="0.42"/><circle cx="385.04" cy="408" r="0.42"/><circle cx="385.04" cy="410.95" r="0.42"/><circle cx="385.04" cy="413.9" r="0.42"/><circle cx="385.04" cy="416.85" r="0.42"/><circle cx="385.04" cy="419.8" r="0.42"/><circle cx="385.04" cy="422.75" r="0.42"/><circle cx="387.78" cy="408" r="0.42"/><circle cx="387.78" cy="410.95" r="0.42"/><circle cx="387.78" cy="413.9" r="0.42"/><circle cx="387.78" cy="416.85" r="0.42"/><circle cx="387.78" cy="419.8" r="0.42"/><circle cx="387.78" cy="422.75" r="0.42"/><circle cx="390.52" cy="408" r="0.42"/><circle cx="390.52" cy="410.95" r="0.42"/><circle cx="390.52" cy="413.9" r="0.42"/><circle cx="390.52" cy="416.85" r="0.42"/><circle cx="390.52" cy="419.8" r="0.42"/><circle cx="390.52" cy="422.75" r="0.42"/><circle cx="393.26" cy="408" r="0.42"/><circle cx="393.26" cy="410.95" r="0.42"/><circle cx="393.26" cy="413.9" r="0.42"/><circle cx="393.26" cy="416.85" r="0.42"/><circle cx="393.26" cy="419.8" r="0.42"/><circle cx="393.26" cy="422.75" r="0.42"/><circle cx="396" cy="408" r="0.42"/><circle cx="396" cy="410.95" r="0.42"/><circle cx="396" cy="413.9" r="0.42"/><circle cx="396" cy="416.85" r="0.42"/><circle cx="396" cy="419.8" r="0.42"/><circle cx="396" cy="422.75" r="0.42"/><circle cx="275.5" cy="520.6" r="0.42"/><circle cx="275.5" cy="523.5" r="0.42"/><circle cx="278.24" cy="520.6" r="0.42"/><circle cx="278.24" cy="523.5" r="0.42"/><circle cx="280.98" cy="520.6" r="0.42"/><circle cx="280.98" cy="523.5" r="0.42"/><circle cx="283.72" cy="520.6" r="0.42"/><circle cx="283.72" cy="523.5" r="0.42"/><circle cx="286.46" cy="520.6" r="0.42"/><circle cx="286.46" cy="523.5" r="0.42"/><circle cx="289.2" cy="520.6" r="0.42"/><circle cx="289.2" cy="523.5" r="0.42"/><circle cx="291.94" cy="520.6" r="0.42"/><circle cx="291.94" cy="523.5" r="0.42"/><circle cx="294.68" cy="520.6" r="0.42"/><circle cx="294.68" cy="523.5" r="0.42"/></g>
  <rect x="282.500" y="491.600" width="69.700" height="18" rx="9" fill="url(#g5c)" stroke="#2c3b68" stroke-width="0.400"/>
  <g font-family="Liberation Sans, sans-serif" font-weight="700" fill="#fff" stroke="#fff" stroke-linejoin="round">
    <text x="280.800" y="442.600" font-size="13.600" stroke-width="0.250" textLength="105.400" lengthAdjust="spacingAndGlyphs">HOW TO BECOME AN</text>
    <text x="280.800" y="462.700" font-size="23" stroke-width="0.300" textLength="194.600" lengthAdjust="spacingAndGlyphs">PAY-PER-CLICK (PPC)</text>
    <text x="280.800" y="483.700" font-size="23.400" stroke-width="0.300" textLength="115.200" lengthAdjust="spacingAndGlyphs">ADVERTISING</text>
    <text x="291.700" y="504.100" font-size="10.800" stroke-width="0.150" textLength="51.400" lengthAdjust="spacingAndGlyphs">WATCH NOW!</text>
  </g>
  <rect x="274" y="524.650" width="232" height="1" fill="#fff"/>
</svg></div>
  <div class="ct"><span class="ln" style="letter-spacing:0.058px">Pay-Per-Click (PPC) Advertising</span></div>
  <div class="cd"><span class="ln" style="letter-spacing:0.144px">In the fast-paced world of digital marketing,</span><span class="ln" style="letter-spacing:0.042px">Pay-Per-Click (PPC) Advertising stands out</span></div>
  <div class="pb"><span>0%</span></div>
  <div class="btn"><span>OPEN</span></div>
</div>
<!-- CARD 6 -->
<div class="card r2 n" style="left:518px;top:401px">
  <div class="body"></div>
  <div class="thumb r2"><svg width="232" height="124" viewBox="518 401 232 124">
  <defs>
    <linearGradient id="g6a" gradientUnits="userSpaceOnUse" x1="518" y1="0" x2="750" y2="0"><stop offset="0" stop-color="#230305"/><stop offset="0.3" stop-color="#4a0608"/><stop offset="0.6" stop-color="#6a0808"/><stop offset="1" stop-color="#2a0305"/></linearGradient>
    <radialGradient id="g6b" gradientUnits="userSpaceOnUse" cx="518" cy="525" r="110"><stop offset="0" stop-color="#0c0102" stop-opacity="0.9"/><stop offset="1" stop-color="#0c0102" stop-opacity="0"/></radialGradient>
    <radialGradient id="g6c" gradientUnits="userSpaceOnUse" cx="750" cy="401" r="90"><stop offset="0" stop-color="#100102" stop-opacity="0.85"/><stop offset="1" stop-color="#100102" stop-opacity="0"/></radialGradient>
    <radialGradient id="g6d" gradientUnits="userSpaceOnUse" cx="518" cy="401" r="80"><stop offset="0" stop-color="#100102" stop-opacity="0.6"/><stop offset="1" stop-color="#100102" stop-opacity="0"/></radialGradient>
    <radialGradient id="g6e" gradientUnits="userSpaceOnUse" cx="750" cy="525" r="80"><stop offset="0" stop-color="#100102" stop-opacity="0.55"/><stop offset="1" stop-color="#100102" stop-opacity="0"/></radialGradient>
  </defs>
  <rect x="518" y="401" width="232" height="124" fill="url(#g6a)"/>
  <polygon points="535,401 556,401 613.04,463 556,525 535,525 592.04,463" fill="#4a0507" opacity="0.45"/><polygon points="577,401 581.5,401 638.54,463 581.5,525 577,525 634.04,463" fill="#860909" opacity="0.9"/><polygon points="581.5,401 588,401 645.04,463 591,525 581.5,525 638.54,463" fill="#2a0204" opacity="0.9"/><polygon points="588,401 615,401 672.04,463 635,525 591,525 645.04,463" fill="#960909" opacity="0.95"/><polygon points="615,401 641,401 698.04,463 655,525 635,525 672.04,463" fill="#800707" opacity="0.95"/><polygon points="641,401 662,401 719.04,463 672,525 655,525 698.04,463" fill="#6e0606" opacity="0.9"/><polygon points="662,401 687,401 744.04,463 690,525 672,525 719.04,463" fill="#620505" opacity="0.9"/><polygon points="687,401 690.5,401 747.54,463 690.5,525 687,525 744.04,463" fill="#900909" opacity="0.9"/><polygon points="690.5,401 700,401 757.04,463 701,525 691,525 747.54,463" fill="#2a0204" opacity="0.95"/><polygon points="700,401 724,401 781.04,463 726,525 701,525 757.04,463" fill="#720707" opacity="0.9"/><polygon points="724,401 748,401 805.04,463 748,525 724,525 781.04,463" fill="#3a0405" opacity="0.9"/><polygon points="748,401 900,401 957.04,463 900,525 748,525 805.04,463" fill="#2e0305" opacity="0.9"/>
  <rect x="518" y="401" width="232" height="124" fill="url(#g6b)"/>
  <rect x="518" y="401" width="232" height="124" fill="url(#g6c)"/>
  <rect x="518" y="401" width="232" height="124" fill="url(#g6d)"/>
  <rect x="518" y="401" width="232" height="124" fill="url(#g6e)"/>
  <g font-family="Liberation Sans, sans-serif" font-weight="700" font-style="italic" stroke-linejoin="round">
    <text x="583.500" y="453.700" font-size="11.900" fill="#fff" stroke="#fff" stroke-width="0.350" textLength="81.400" lengthAdjust="spacingAndGlyphs">INFLUENCER</text>
    <text x="523.200" y="480.600" font-size="31.400" fill="#ffc20a" stroke="#ffc20a" stroke-width="1.300" textLength="212.800" lengthAdjust="spacingAndGlyphs">MARKETING</text>
  </g>
  <rect x="518" y="524.650" width="232" height="1" fill="#fff"/>
</svg></div>
  <div class="ct"><span class="ln" style="letter-spacing:0.056px">Influencer Marketing</span></div>
  <div class="cd"><span class="ln" style="letter-spacing:0.120px">visibility and engagement through Influencer</span><span class="ln" style="letter-spacing:0.161px">Marketing. Collaborate with trusted</span></div>
  <div class="pb"><span>0%</span></div>
  <div class="btn"><span>OPEN</span></div>
</div>
</body>
</html>
